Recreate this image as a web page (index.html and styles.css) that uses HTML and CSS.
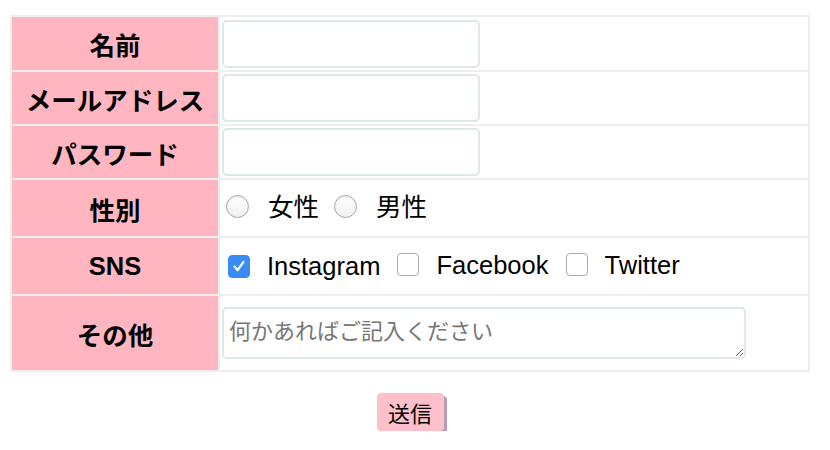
FILE: index.html
```html
<!DOCTYPE html>
<html lang="ja">
<head>
  <meta charset="UTF-8">
  <title>お問い合わせフォーム</title>
  <link rel="stylesheet" href="styles.css">
</head>
<body>
  <form class="contact-form">
    <table class="form-table">
      <tr class="row-text">
        <th>名前</th>
        <td><input type="text" name="name"></td>
      </tr>
      <tr class="row-text">
        <th>メールアドレス</th>
        <td><input type="email" name="email"></td>
      </tr>
      <tr class="row-text">
        <th>パスワード</th>
        <td><input type="password" name="password"></td>
      </tr>
      <tr class="row-choice">
        <th>性別</th>
        <td class="choices">
          <label class="choice"><input type="radio" name="gender" value="female"><span class="radio"></span>女性</label>
          <label class="choice"><input type="radio" name="gender" value="male"><span class="radio"></span>男性</label>
        </td>
      </tr>
      <tr class="row-choice">
        <th>SNS</th>
        <td class="choices">
          <label class="choice"><input type="checkbox" name="sns" value="instagram" checked><span class="check"><svg viewBox="0 0 20 20" width="20" height="20"><path d="M5.5 10.5 L8.6 14.2 L14.5 5.8" fill="none" stroke="#fff" stroke-width="2.2" stroke-linecap="round" stroke-linejoin="round"/></svg></span>Instagram</label>
          <label class="choice"><input type="checkbox" name="sns" value="facebook"><span class="check"><svg viewBox="0 0 20 20" width="20" height="20"><path d="M5.5 10.5 L8.6 14.2 L14.5 5.8" fill="none" stroke="#fff" stroke-width="2.2" stroke-linecap="round" stroke-linejoin="round"/></svg></span>Facebook</label>
          <label class="choice"><input type="checkbox" name="sns" value="twitter"><span class="check"><svg viewBox="0 0 20 20" width="20" height="20"><path d="M5.5 10.5 L8.6 14.2 L14.5 5.8" fill="none" stroke="#fff" stroke-width="2.2" stroke-linecap="round" stroke-linejoin="round"/></svg></span>Twitter</label>
        </td>
      </tr>
      <tr class="row-area">
        <th>その他</th>
        <td><textarea name="other" placeholder="何かあればご記入ください"></textarea></td>
      </tr>
    </table>
    <div class="submit-area">
      <button type="submit">送信</button>
    </div>
  </form>
</body>
</html>
```

FILE: styles.css
```css
body {
  margin: 0;
  padding: 15px 10px 0;
  font-family: "Liberation Sans", "Noto Sans CJK JP", sans-serif;
  color: #000;
  background-color: #fff;
}

.form-table {
  width: 800px;
  border-collapse: separate;
  border-spacing: 2px;
  background-color: #eeeeee;
}

.form-table th,
.form-table td {
  padding: 0;
  vertical-align: middle;
}

.form-table th {
  width: 206px;
  background-color: #ffb6c1;
  font-size: 25.5px;
  font-weight: bold;
  text-align: center;
}

.form-table td {
  background-color: #fff;
  padding-left: 2px;
}

.row-text { height: 52px; }
.row-text:first-child { height: 53px; }
.row-choice { height: 56px; }
.row-area { height: 74px; }

input[type="text"],
input[type="email"],
input[type="password"] {
  display: block;
  box-sizing: border-box;
  width: 258px;
  height: 48px;
  border: 2px solid #dee7ea;
  border-radius: 5px;
  font-size: 20px;
  padding: 0 6px;
}

.choices {
  font-size: 25.5px;
}

.form-table td.choices {
  padding-left: 6px;
}

.choice {
  display: inline-flex;
  align-items: center;
  margin-right: 8px;
  line-height: 30px;
}

.choice input {
  display: none;
}

.radio {
  flex: none;
  box-sizing: border-box;
  width: 23px;
  height: 23px;
  margin-right: 19px;
  border: 1px solid #a9a9a9;
  border-radius: 50%;
  background: linear-gradient(#ffffff, #f0f0f0);
  box-shadow: inset 0 1px 2px rgba(0, 0, 0, 0.1);
}

.check {
  flex: none;
  box-sizing: border-box;
  display: flex;
  align-items: center;
  justify-content: center;
  width: 22px;
  height: 23px;
  margin: 0 17px 0 2px;
  border: 1px solid #a9a9a9;
  border-radius: 4px;
  background-color: #fff;
}

.check svg {
  display: none;
}

.choice input:checked + .check {
  border-color: #3a8cf4;
  background-color: #3a8cf4;
}

.choice input:checked + .check svg {
  display: block;
}

textarea {
  display: block;
  box-sizing: border-box;
  width: 524px;
  height: 52px;
  border: 2px solid #dee7ea;
  border-radius: 5px;
  padding: 7px 5px;
  font-family: "Noto Sans CJK JP", sans-serif;
  font-size: 22px;
  line-height: 26px;
}

textarea::placeholder {
  color: #767676;
}

.submit-area {
  width: 800px;
  margin-top: 21px;
  text-align: center;
}

.submit-area button {
  width: 67px;
  height: 38px;
  border: none;
  border-radius: 4px;
  background-color: #ffc0cb;
  box-shadow: 3px 3px 0 #b49eb4;
  font-family: "Noto Sans CJK JP", sans-serif;
  font-size: 22px;
  color: #000;
  padding: 0;
}
```
